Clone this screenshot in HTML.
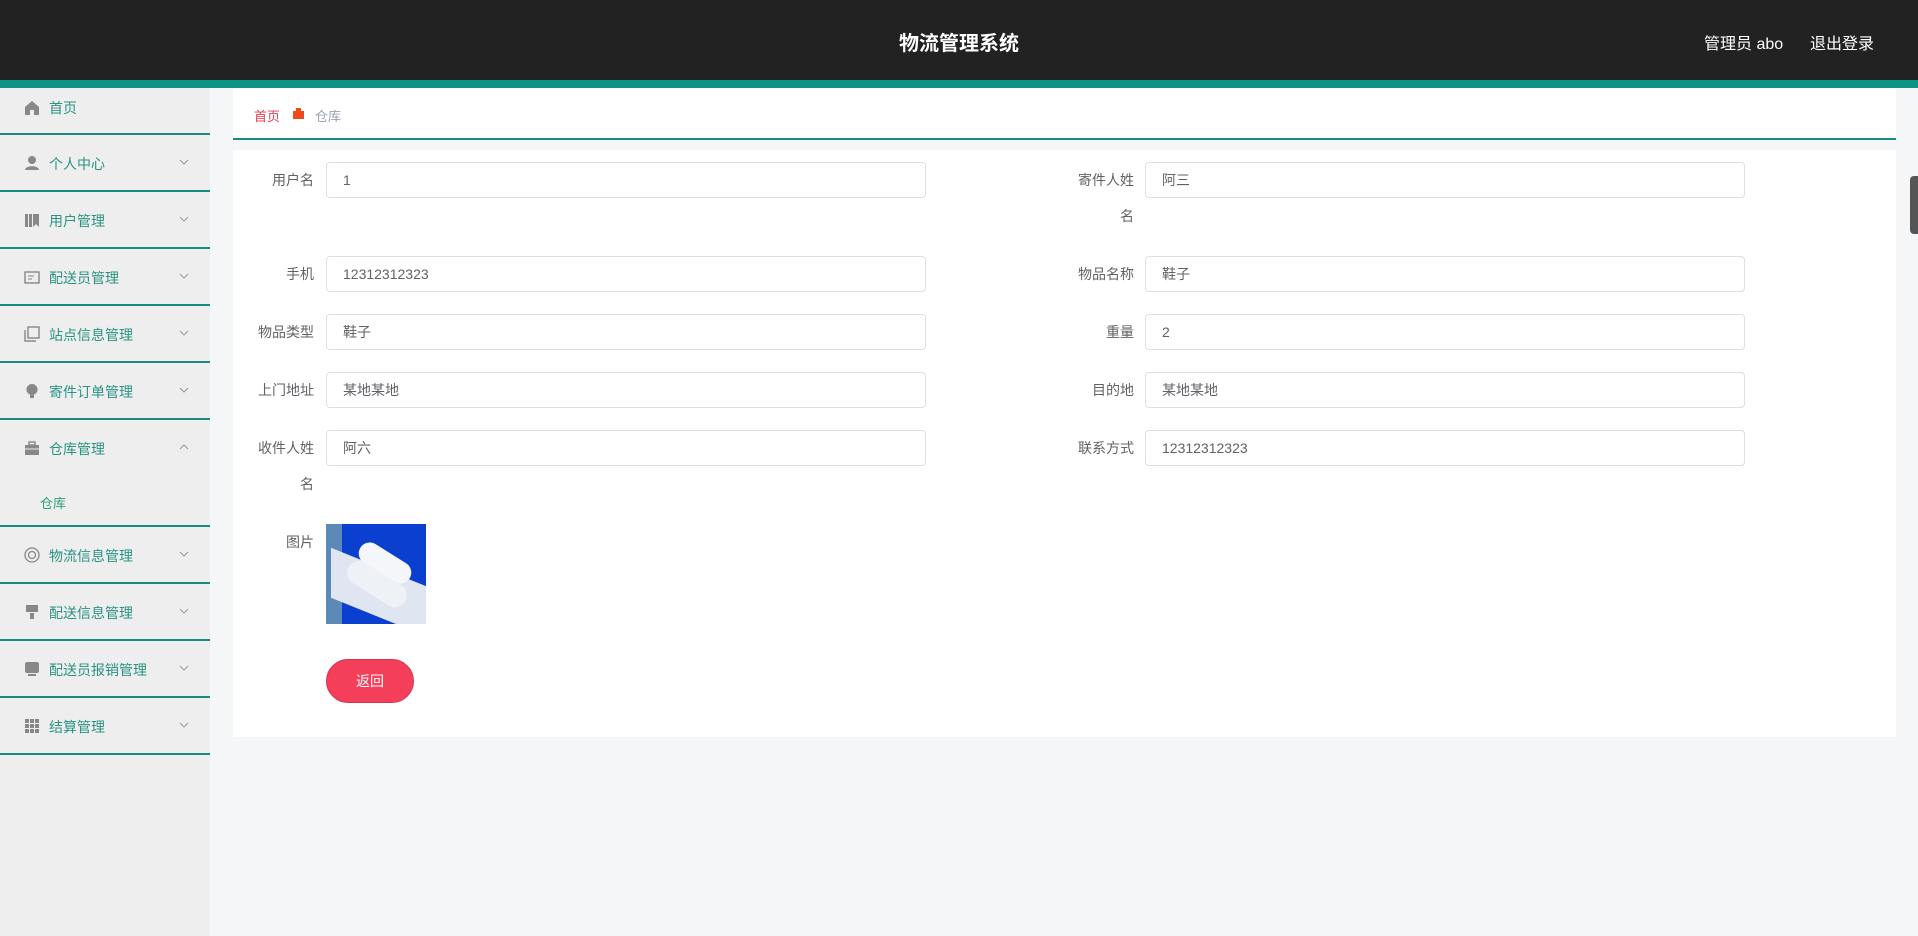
<!DOCTYPE html>
<html><head><meta charset="utf-8"><style>
*{margin:0;padding:0;box-sizing:border-box}
body{width:1918px;height:936px;background:#f5f6f8;font-family:"Liberation Sans","Noto Sans CJK SC",sans-serif;position:relative;overflow:hidden}
.hdr{position:absolute;left:0;top:0;width:1918px;height:80px;background:#222}
.hdr .bar{position:absolute;left:0;top:80px;width:1918px;height:8px;background:#0c9384}
.title{position:absolute;left:0;width:1918px;top:27px;text-align:center;color:#fff;font-size:20px;font-weight:bold}
.user{position:absolute;left:1704px;top:30px;color:#fff;font-size:16px}
.logout{position:absolute;left:1810px;top:30px;color:#fff;font-size:16px}
.side{position:absolute;left:0;top:88px;width:210px;height:848px;background:#eee}
.it{position:absolute;left:0;width:210px;border-bottom:2px solid #1a8a7f;color:#2a9383;font-size:14px;font-weight:normal}
.it span{position:absolute;left:49px}
.it svg.ic{position:absolute;left:24px;width:16px;height:16px}
.it .ch{position:absolute;left:179px;width:10px;height:6px}
.crumb{position:absolute;left:233px;top:88px;width:1663px;height:52px;background:#fff;border-bottom:2px solid #1a8a7f}
.card{position:absolute;left:233px;top:150px;width:1663px;height:587px;background:#fff}
.lbl{position:absolute;color:#606266;font-size:14px;text-align:right;width:80px;line-height:36px}
.inp{position:absolute;height:36px;width:600px;border:1px solid #dcdfe6;border-radius:4px;font-size:14px;color:#606266;padding-left:16px;line-height:34px;background:#fff}
</style></head><body>
<div class="hdr"><div class="title">物流管理系统</div><div class="user">管理员 abo</div><div class="logout">退出登录</div><div class="bar"></div></div>
<div class="side">
<div class="it" style="top:0;height:47px"><svg class="ic" style="top:12px" viewBox="0 0 16 16"><path d="M8 1L1 7v8h5v-5h4v5h5V7z" fill="#888"/></svg><span style="top:10px">首页</span></div>
<div class="it" style="top:47px;height:57px"><svg class="ic" style="top:20px" viewBox="0 0 16 16"><circle cx="8" cy="5" r="4" fill="#888"/><path d="M1 15c0-5 14-5 14 0z" fill="#888"/></svg><span style="top:19px">个人中心</span><svg class="ch" style="top:24px" viewBox="0 0 10 6"><path d="M1 1l4 4 4-4" stroke="#999" fill="none"/></svg></div>
<div class="it" style="top:104px;height:57px"><svg class="ic" style="top:20px" viewBox="0 0 16 16"><path d="M1 2h3v13H1zM5 2h3v13H5zM9 2h6v13l-3-3-3 3z" fill="#888"/></svg><span style="top:19px">用户管理</span><svg class="ch" style="top:24px" viewBox="0 0 10 6"><path d="M1 1l4 4 4-4" stroke="#999" fill="none"/></svg></div>
<div class="it" style="top:161px;height:57px"><svg class="ic" style="top:20px" viewBox="0 0 16 16"><rect x="1" y="3" width="14" height="11" fill="none" stroke="#888" stroke-width="1.4"/><path d="M4 7h6M4 10h4" stroke="#888"/></svg><span style="top:19px">配送员管理</span><svg class="ch" style="top:24px" viewBox="0 0 10 6"><path d="M1 1l4 4 4-4" stroke="#999" fill="none"/></svg></div>
<div class="it" style="top:218px;height:57px"><svg class="ic" style="top:20px" viewBox="0 0 16 16"><rect x="4" y="1" width="11" height="11" fill="none" stroke="#888" stroke-width="1.4"/><path d="M1 4v11h11" stroke="#888" fill="none" stroke-width="1.4"/></svg><span style="top:19px">站点信息管理</span><svg class="ch" style="top:24px" viewBox="0 0 10 6"><path d="M1 1l4 4 4-4" stroke="#999" fill="none"/></svg></div>
<div class="it" style="top:275px;height:57px"><svg class="ic" style="top:20px" viewBox="0 0 16 16"><circle cx="8" cy="6.5" r="5.5" fill="#888"/><rect x="6" y="12" width="4" height="3" fill="#888"/></svg><span style="top:19px">寄件订单管理</span><svg class="ch" style="top:24px" viewBox="0 0 10 6"><path d="M1 1l4 4 4-4" stroke="#999" fill="none"/></svg></div>
<div class="it" style="top:332px;height:107px"><svg class="ic" style="top:20px" viewBox="0 0 16 16"><rect x="1" y="5" width="14" height="10" fill="#888"/><rect x="5" y="2" width="6" height="3" fill="none" stroke="#888" stroke-width="1.4"/><path d="M1 9h14" stroke="#eee"/></svg><span style="top:19px">仓库管理</span><svg class="ch" style="top:24px" viewBox="0 0 10 6"><path d="M1 5l4-4 4 4" stroke="#999" fill="none"/></svg><span style="left:40px;top:73px;font-size:13px;color:#2aa07a">仓库</span></div>
<div class="it" style="top:439px;height:57px"><svg class="ic" style="top:20px" viewBox="0 0 16 16"><circle cx="8" cy="8" r="7" fill="none" stroke="#888" stroke-width="1.3"/><circle cx="8" cy="8" r="3.5" fill="none" stroke="#888" stroke-width="1.3"/></svg><span style="top:19px">物流信息管理</span><svg class="ch" style="top:24px" viewBox="0 0 10 6"><path d="M1 1l4 4 4-4" stroke="#999" fill="none"/></svg></div>
<div class="it" style="top:496px;height:57px"><svg class="ic" style="top:20px" viewBox="0 0 16 16"><rect x="2" y="1" width="12" height="7" fill="#888"/><rect x="6" y="9" width="4" height="6" fill="#888"/></svg><span style="top:19px">配送信息管理</span><svg class="ch" style="top:24px" viewBox="0 0 10 6"><path d="M1 1l4 4 4-4" stroke="#999" fill="none"/></svg></div>
<div class="it" style="top:553px;height:57px"><svg class="ic" style="top:20px" viewBox="0 0 16 16"><rect x="1" y="1" width="14" height="11" rx="2" fill="#888"/><rect x="4" y="13" width="8" height="2" fill="#888"/></svg><span style="top:19px">配送员报销管理</span><svg class="ch" style="top:24px" viewBox="0 0 10 6"><path d="M1 1l4 4 4-4" stroke="#999" fill="none"/></svg></div>
<div class="it" style="top:610px;height:57px"><svg class="ic" style="top:20px" viewBox="0 0 16 16"><path d="M1 1h4v4H1zM6 1h4v4H6zM11 1h4v4h-4zM1 6h4v4H1zM6 6h4v4H6zM11 6h4v4h-4zM1 11h4v4H1zM6 11h4v4H6zM11 11h4v4h-4z" fill="#888"/></svg><span style="top:19px">结算管理</span><svg class="ch" style="top:24px" viewBox="0 0 10 6"><path d="M1 1l4 4 4-4" stroke="#999" fill="none"/></svg></div>
</div>
<div class="crumb"><span style="position:absolute;left:21px;top:18px;font-size:13px;color:#e8384f">首页</span><svg style="position:absolute;left:60px;top:20px" width="11" height="11" viewBox="0 0 11 11"><rect x="0" y="3" width="11" height="8" fill="#f04a1a"/><rect x="3" y="0" width="5" height="3" fill="#f04a1a"/></svg><span style="position:absolute;left:82px;top:18px;font-size:13px;color:#9aa3b5">仓库</span></div>
<div class="card"></div>
<div class="lbl" style="left:234px;top:162px">用户名</div><div class="inp" style="left:326px;top:162px">1</div>
<div class="lbl" style="left:1054px;top:162px">寄件人姓</div><div class="lbl" style="left:1054px;top:198px">名</div><div class="inp" style="left:1145px;top:162px">阿三</div>
<div class="lbl" style="left:234px;top:256px">手机</div><div class="inp" style="left:326px;top:256px">12312312323</div>
<div class="lbl" style="left:1054px;top:256px">物品名称</div><div class="inp" style="left:1145px;top:256px">鞋子</div>
<div class="lbl" style="left:234px;top:314px">物品类型</div><div class="inp" style="left:326px;top:314px">鞋子</div>
<div class="lbl" style="left:1054px;top:314px">重量</div><div class="inp" style="left:1145px;top:314px">2</div>
<div class="lbl" style="left:234px;top:372px">上门地址</div><div class="inp" style="left:326px;top:372px">某地某地</div>
<div class="lbl" style="left:1054px;top:372px">目的地</div><div class="inp" style="left:1145px;top:372px">某地某地</div>
<div class="lbl" style="left:234px;top:430px">收件人姓</div><div class="lbl" style="left:234px;top:466px">名</div><div class="inp" style="left:326px;top:430px">阿六</div>
<div class="lbl" style="left:1054px;top:430px">联系方式</div><div class="inp" style="left:1145px;top:430px">12312312323</div>
<div class="lbl" style="left:234px;top:524px;line-height:36px">图片</div>
<div style="position:absolute;left:326px;top:524px;width:100px;height:100px;background:#0a3fcf;overflow:hidden">
<div style="position:absolute;left:0;top:0;width:16px;height:100px;background:#5b8ab8"></div>
<div style="position:absolute;left:5px;top:50px;width:130px;height:50px;background:#dfe6f2;transform:skewY(22deg)"></div>
<div style="position:absolute;left:30px;top:28px;width:58px;height:22px;border-radius:11px;background:#f4f6fa;transform:rotate(32deg)"></div>
<div style="position:absolute;left:18px;top:48px;width:66px;height:24px;border-radius:12px;background:#eef1f6;transform:rotate(32deg)"></div>
</div>
<div style="position:absolute;left:326px;top:659px;width:88px;height:44px;border-radius:22px;background:#f43f5b;border:1px solid #d8334c;color:#fff;font-size:14px;text-align:center;line-height:42px">返回</div>
<div style="position:absolute;left:1910px;top:176px;width:8px;height:58px;background:#555;border-radius:4px 0 0 4px"></div>
</body></html>
